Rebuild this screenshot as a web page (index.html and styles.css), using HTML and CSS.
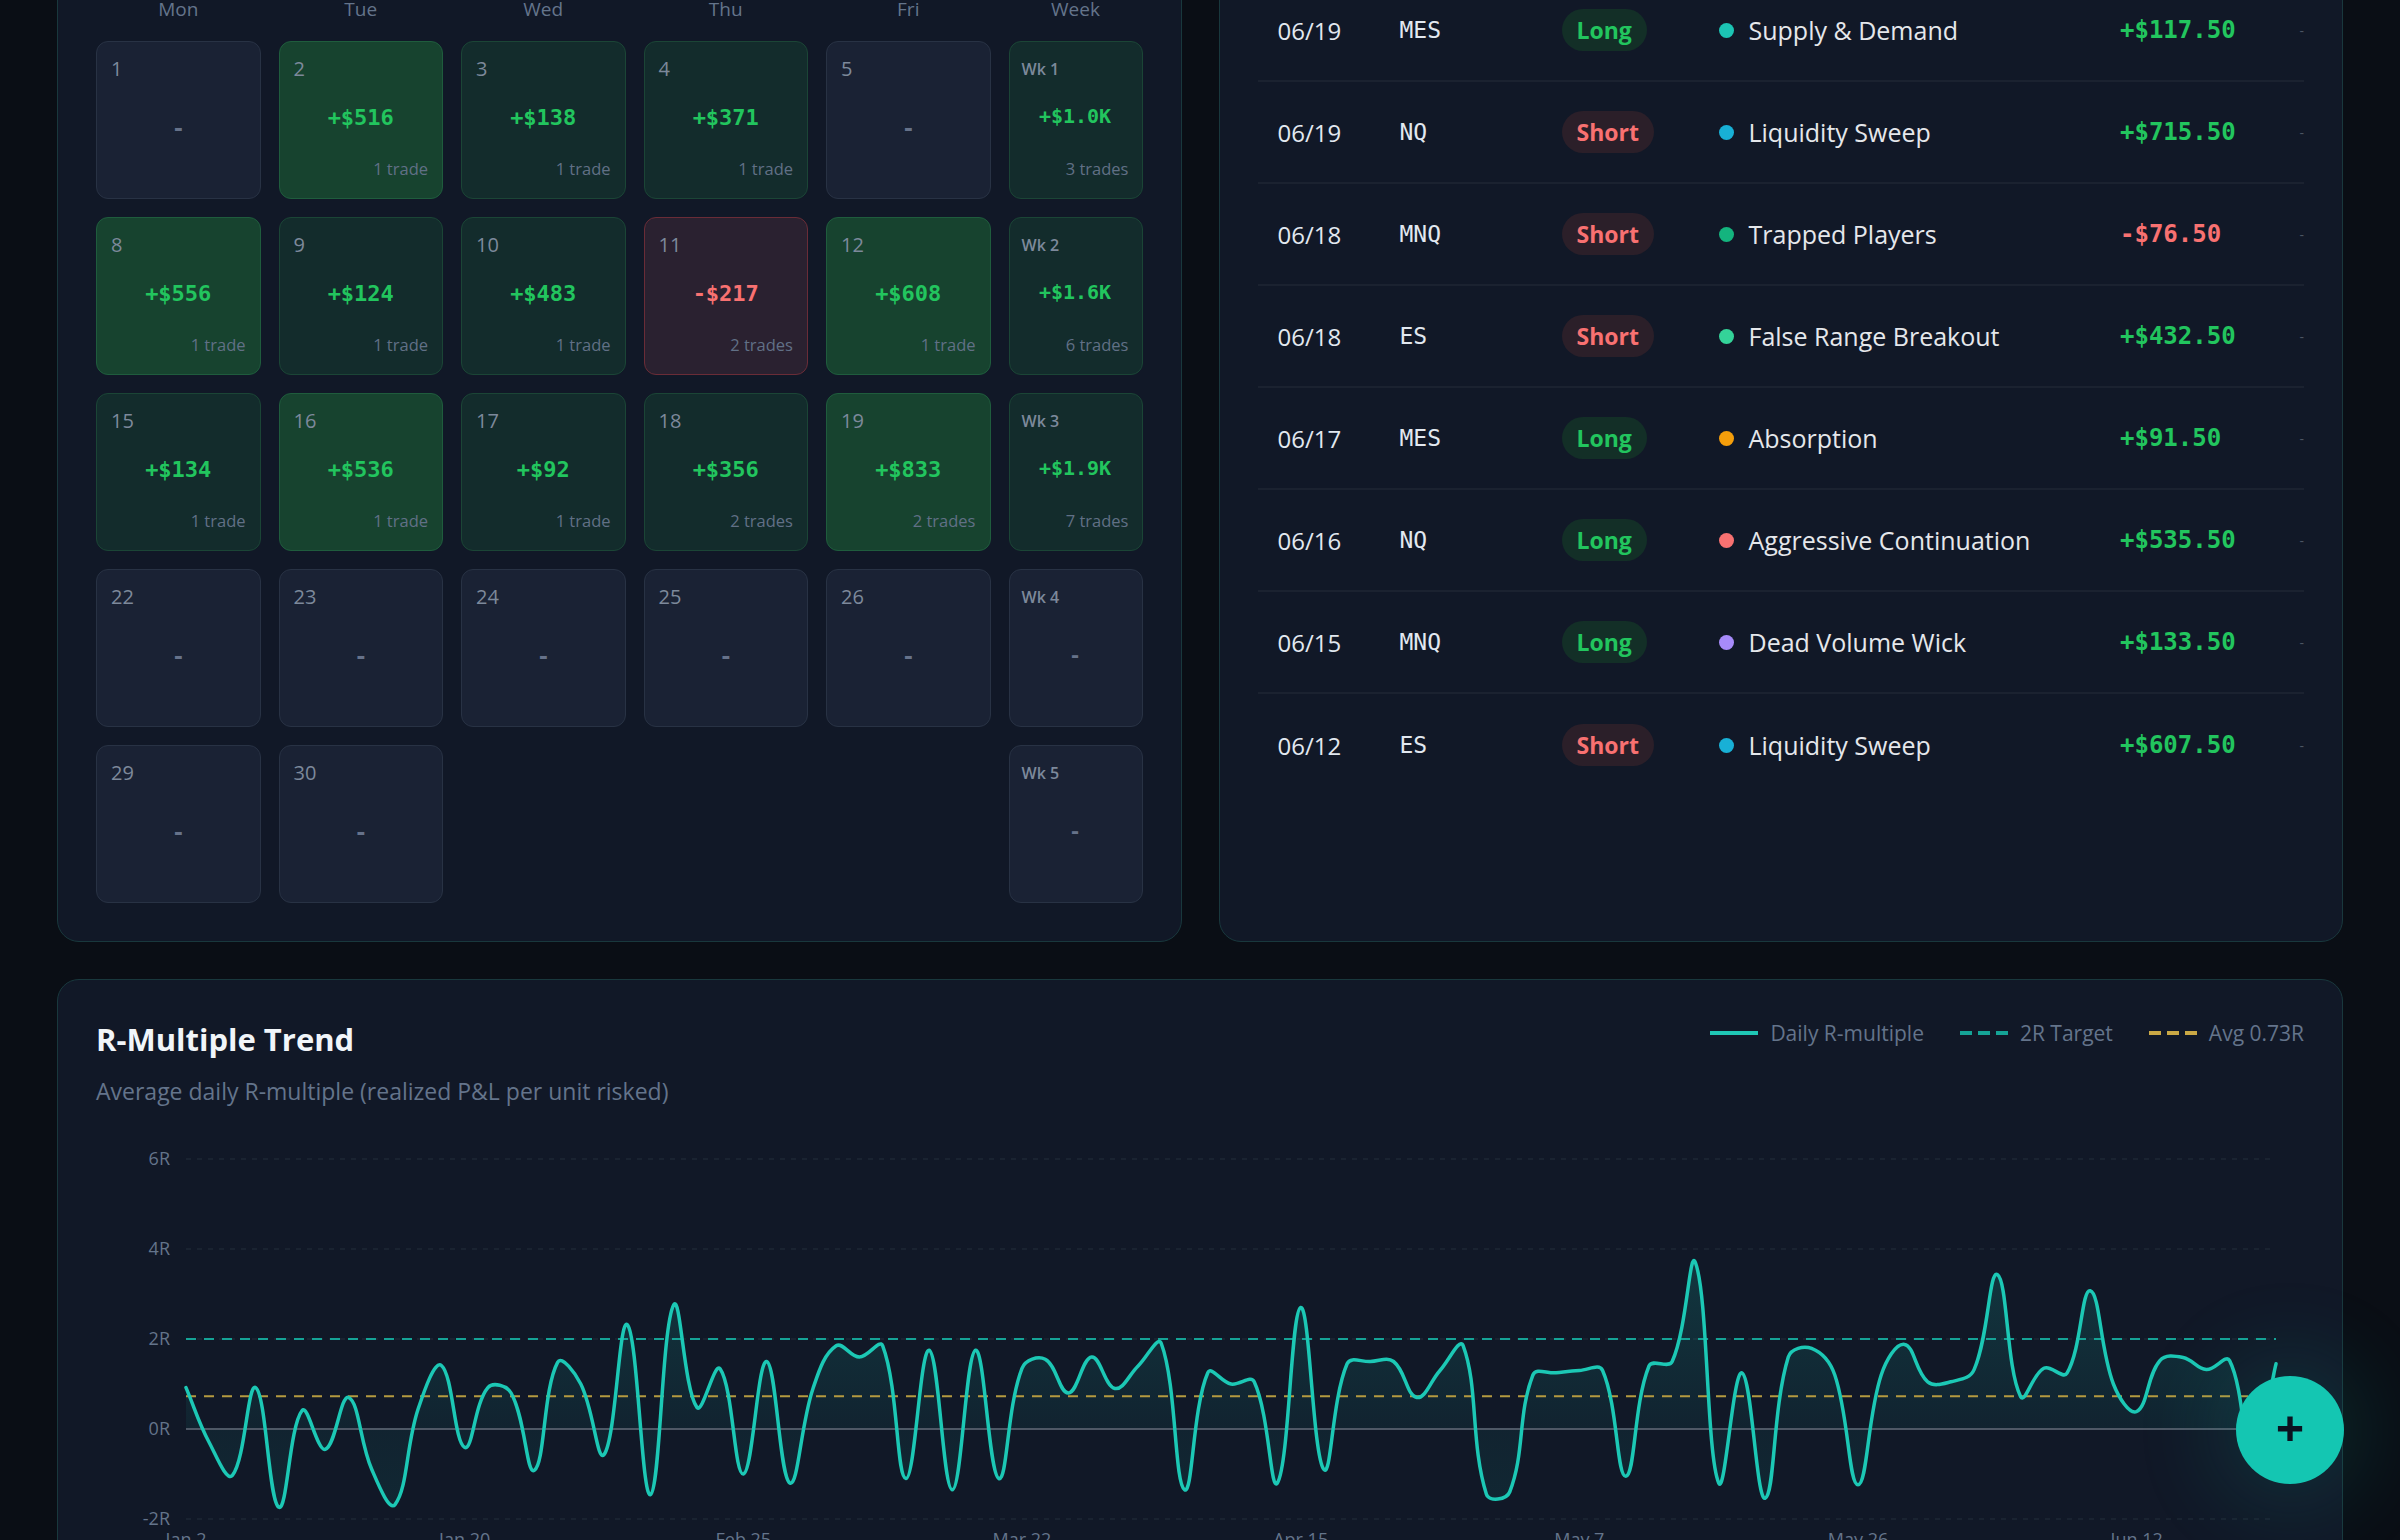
FILE: index.html
```html
<!DOCTYPE html>
<html lang="en">
<head>
    <meta charset="UTF-8">
    <meta name="viewport" content="width=device-width, initial-scale=1.0">
    <title>Trading Journal</title>
    <link rel="stylesheet" href="styles.css">
</head>
<body>
    <main class="dashboard">
        <section class="top-row">
            <div class="card calendar-card">
                <div class="card-head">
                    <h2 class="card-title">June 2026</h2>
                    <div class="month-nav"><span>&lsaquo;</span><span>&rsaquo;</span></div>
                </div>
                <div class="cal-weekdays">
                    <span>Mon</span><span>Tue</span><span>Wed</span><span>Thu</span><span>Fri</span><span>Week</span>
                </div>
                <div class="cal-grid">
                    <div class="day"><span class="day-num">1</span><span class="day-pnl">-</span></div>
                    <div class="day big-win"><span class="day-num">2</span><span class="day-pnl">+$516</span><span class="day-count">1 trade</span></div>
                    <div class="day win"><span class="day-num">3</span><span class="day-pnl">+$138</span><span class="day-count">1 trade</span></div>
                    <div class="day win"><span class="day-num">4</span><span class="day-pnl">+$371</span><span class="day-count">1 trade</span></div>
                    <div class="day"><span class="day-num">5</span><span class="day-pnl">-</span></div>
                    <div class="day week win"><span class="day-num">Wk 1</span><span class="day-pnl">+$1.0K</span><span class="day-count">3 trades</span></div>

                    <div class="day big-win"><span class="day-num">8</span><span class="day-pnl">+$556</span><span class="day-count">1 trade</span></div>
                    <div class="day win"><span class="day-num">9</span><span class="day-pnl">+$124</span><span class="day-count">1 trade</span></div>
                    <div class="day win"><span class="day-num">10</span><span class="day-pnl">+$483</span><span class="day-count">1 trade</span></div>
                    <div class="day loss"><span class="day-num">11</span><span class="day-pnl">-$217</span><span class="day-count">2 trades</span></div>
                    <div class="day big-win"><span class="day-num">12</span><span class="day-pnl">+$608</span><span class="day-count">1 trade</span></div>
                    <div class="day week win"><span class="day-num">Wk 2</span><span class="day-pnl">+$1.6K</span><span class="day-count">6 trades</span></div>

                    <div class="day win"><span class="day-num">15</span><span class="day-pnl">+$134</span><span class="day-count">1 trade</span></div>
                    <div class="day big-win"><span class="day-num">16</span><span class="day-pnl">+$536</span><span class="day-count">1 trade</span></div>
                    <div class="day win"><span class="day-num">17</span><span class="day-pnl">+$92</span><span class="day-count">1 trade</span></div>
                    <div class="day win"><span class="day-num">18</span><span class="day-pnl">+$356</span><span class="day-count">2 trades</span></div>
                    <div class="day big-win"><span class="day-num">19</span><span class="day-pnl">+$833</span><span class="day-count">2 trades</span></div>
                    <div class="day week win"><span class="day-num">Wk 3</span><span class="day-pnl">+$1.9K</span><span class="day-count">7 trades</span></div>

                    <div class="day"><span class="day-num">22</span><span class="day-pnl">-</span></div>
                    <div class="day"><span class="day-num">23</span><span class="day-pnl">-</span></div>
                    <div class="day"><span class="day-num">24</span><span class="day-pnl">-</span></div>
                    <div class="day"><span class="day-num">25</span><span class="day-pnl">-</span></div>
                    <div class="day"><span class="day-num">26</span><span class="day-pnl">-</span></div>
                    <div class="day week"><span class="day-num">Wk 4</span><span class="day-pnl">-</span></div>

                    <div class="day"><span class="day-num">29</span><span class="day-pnl">-</span></div>
                    <div class="day"><span class="day-num">30</span><span class="day-pnl">-</span></div>
                    <div class="blank"></div>
                    <div class="blank"></div>
                    <div class="blank"></div>
                    <div class="day week"><span class="day-num">Wk 5</span><span class="day-pnl">-</span></div>
                </div>
            </div>

            <div class="card trades-card">
                <div class="card-head">
                    <h2 class="card-title">Recent Trades</h2>
                    <a class="view-all">View all</a>
                </div>
                <div class="trade-list">
                    <div class="trade-row">
                        <span class="trade-date">06/19</span><span class="trade-sym">MES</span>
                        <span class="side long">Long</span>
                        <span class="strategy"><i class="dot" style="background:#1cc4b4"></i>Supply &amp; Demand</span>
                        <span class="pnl">+$117.50</span><span class="trade-more">-</span>
                    </div>
                    <div class="trade-row">
                        <span class="trade-date">06/19</span><span class="trade-sym">NQ</span>
                        <span class="side short">Short</span>
                        <span class="strategy"><i class="dot" style="background:#18b0d6"></i>Liquidity Sweep</span>
                        <span class="pnl">+$715.50</span><span class="trade-more">-</span>
                    </div>
                    <div class="trade-row">
                        <span class="trade-date">06/18</span><span class="trade-sym">MNQ</span>
                        <span class="side short">Short</span>
                        <span class="strategy"><i class="dot" style="background:#14b47e"></i>Trapped Players</span>
                        <span class="pnl neg">-$76.50</span><span class="trade-more">-</span>
                    </div>
                    <div class="trade-row">
                        <span class="trade-date">06/18</span><span class="trade-sym">ES</span>
                        <span class="side short">Short</span>
                        <span class="strategy"><i class="dot" style="background:#34d399"></i>False Range Breakout</span>
                        <span class="pnl">+$432.50</span><span class="trade-more">-</span>
                    </div>
                    <div class="trade-row">
                        <span class="trade-date">06/17</span><span class="trade-sym">MES</span>
                        <span class="side long">Long</span>
                        <span class="strategy"><i class="dot" style="background:#f59e0b"></i>Absorption</span>
                        <span class="pnl">+$91.50</span><span class="trade-more">-</span>
                    </div>
                    <div class="trade-row">
                        <span class="trade-date">06/16</span><span class="trade-sym">NQ</span>
                        <span class="side long">Long</span>
                        <span class="strategy"><i class="dot" style="background:#f87171"></i>Aggressive Continuation</span>
                        <span class="pnl">+$535.50</span><span class="trade-more">-</span>
                    </div>
                    <div class="trade-row">
                        <span class="trade-date">06/15</span><span class="trade-sym">MNQ</span>
                        <span class="side long">Long</span>
                        <span class="strategy"><i class="dot" style="background:#a78bfa"></i>Dead Volume Wick</span>
                        <span class="pnl">+$133.50</span><span class="trade-more">-</span>
                    </div>
                    <div class="trade-row">
                        <span class="trade-date">06/12</span><span class="trade-sym">ES</span>
                        <span class="side short">Short</span>
                        <span class="strategy"><i class="dot" style="background:#18b0d6"></i>Liquidity Sweep</span>
                        <span class="pnl">+$607.50</span><span class="trade-more">-</span>
                    </div>
                </div>
            </div>
        </section>

        <section class="card trend-card">
            <div class="trend-head">
                <div>
                    <h2 class="trend-title">R-Multiple Trend</h2>
                    <p class="trend-sub">Average daily R-multiple (realized P&amp;L per unit risked)</p>
                </div>
                <div class="legend">
                    <span class="legend-item"><i class="swatch line"></i>Daily R-multiple</span>
                    <span class="legend-item"><i class="swatch target"></i>2R Target</span>
                    <span class="legend-item"><i class="swatch avg"></i>Avg 0.73R</span>
                </div>
            </div>
            <svg class="trend-chart" id="trendChart" viewBox="0 0 2208 440"></svg>
        </section>
    </main>

    <button class="fab">+</button>

    <script src="trend.js"></script>
</body>
</html>
```

FILE: styles.css
```css
* {
    box-sizing: border-box;
}
body {
    margin: 0;
    background-color: #0a0e15;
    color: #e2e8f0;
    font-family: "Open Sans", "Noto Sans", sans-serif;
    overflow: hidden;
}
.dashboard {
    display: flex;
    flex-direction: column;
    gap: 37px;
    padding: 0 57px;
}
.top-row {
    display: grid;
    grid-template-columns: 1fr 1fr;
    gap: 37px;
    margin-top: -115px;
}
.card {
    background: #111827;
    border: 1px solid #19383d;
    border-radius: 22px;
    padding: 38px;
}
.card-head {
    height: 40px;
    margin-bottom: 16px;
    display: flex;
    align-items: center;
    justify-content: space-between;
}
.card-title {
    margin: 0;
    font-size: 26px;
    font-weight: 700;
    color: #f1f5f9;
}
.month-nav {
    display: flex;
    gap: 20px;
    font-size: 28px;
    color: #64748b;
}
.view-all {
    font-size: 18px;
    color: #2dd4bf;
}

/* calendar */
.cal-weekdays,
.cal-grid {
    display: grid;
    grid-template-columns: repeat(5, 1fr) 134px;
    column-gap: 18px;
}
.cal-weekdays {
    padding-top: 16px;
    margin-bottom: 19px;
    font-size: 19px;
    line-height: 26px;
    color: #64748b;
    text-align: center;
}
.cal-grid {
    grid-auto-rows: 158px;
    row-gap: 18px;
}
.day {
    display: flex;
    flex-direction: column;
    padding: 14px 14px 18px;
    background: #1a2234;
    border: 1px solid #283244;
    border-radius: 12px;
}
.day-num {
    font-size: 20px;
    line-height: 26px;
    color: #7d899b;
}
.day-pnl {
    flex: 1;
    display: flex;
    align-items: center;
    justify-content: center;
    margin-bottom: 6px;
    font-family: "DejaVu Sans Mono", "Liberation Mono", monospace;
    font-size: 22px;
    font-weight: 700;
    color: #66728a;
}
.day-count {
    text-align: right;
    font-size: 16.5px;
    line-height: 22px;
    color: #617086;
}
.day.win {
    background: #132c2c;
    border-color: #1b4536;
}
.day.big-win {
    background: #17432f;
    border-color: #1f5c3d;
}
.day.loss {
    background: #2a2130;
    border-color: #6a2c37;
}
.day.win .day-pnl,
.day.big-win .day-pnl {
    color: #22c55e;
}
.day.loss .day-pnl {
    color: #f87171;
}
.day.week {
    padding: 16px 13px 18px 12px;
}
.week .day-num {
    font-size: 16px;
    line-height: 22px;
    font-weight: 600;
}
.week .day-pnl {
    font-size: 20px;
}

/* recent trades */
.trade-row {
    display: grid;
    grid-template-columns: 122px 162px 157px 1fr 172px 12px;
    align-items: center;
    height: 102px;
    padding-left: 20px;
    border-bottom: 2px solid #1b2230;
}
.trade-row:last-child {
    border-bottom: none;
}
.trade-date {
    font-size: 24px;
    color: #e2e8f0;
}
.trade-sym {
    font-family: "DejaVu Sans Mono", "Liberation Mono", monospace;
    font-size: 23px;
    color: #e2e8f0;
}
.side {
    justify-self: start;
    padding: 8px 15px;
    border-radius: 999px;
    font-size: 23px;
    line-height: 26px;
    font-weight: 700;
}
.side.long {
    background: #132f27;
    color: #22c55e;
}
.side.short {
    background: #2b1f29;
    color: #f87171;
}
.strategy {
    display: flex;
    align-items: center;
    gap: 15px;
    font-size: 25px;
    color: #e5e7eb;
}
.dot {
    width: 15px;
    height: 15px;
    border-radius: 50%;
}
.pnl {
    font-family: "DejaVu Sans Mono", "Liberation Mono", monospace;
    font-size: 24px;
    font-weight: 700;
    color: #22c55e;
}
.pnl.neg {
    color: #f87171;
}
.trade-more {
    text-align: right;
    font-size: 14px;
    color: #4b5563;
}

/* r-multiple chart */
.trend-head {
    display: flex;
    justify-content: space-between;
    align-items: flex-start;
}
.trend-title {
    margin: 0;
    font-size: 31px;
    line-height: 42px;
    font-weight: 700;
    color: #f1f5f9;
}
.trend-sub {
    margin: 16px 0 0;
    font-size: 23px;
    line-height: 30px;
    color: #64748b;
}
.legend {
    display: flex;
    gap: 36px;
    font-size: 21px;
    line-height: 30px;
    color: #64748b;
}
.legend-item {
    display: flex;
    align-items: center;
    gap: 12px;
}
.swatch {
    width: 48px;
    height: 4px;
}
.swatch.line {
    background: #1fc7b5;
}
.swatch.target {
    background: repeating-linear-gradient(90deg, #15a396 0 12px, transparent 12px 18px);
}
.swatch.avg {
    background: repeating-linear-gradient(90deg, #caa845 0 12px, transparent 12px 18px);
}
.trend-chart {
    display: block;
    width: 100%;
    height: 440px;
    margin-top: 25px;
}
.trend-chart text {
    font-family: "Open Sans", "Noto Sans", sans-serif;
    font-size: 18px;
    fill: #64748b;
}

.fab {
    position: fixed;
    right: 56px;
    bottom: 56px;
    width: 108px;
    height: 108px;
    display: flex;
    align-items: center;
    justify-content: center;
    border: none;
    border-radius: 50%;
    background: #14c6b2;
    color: #0b1220;
    font-family: "Open Sans", sans-serif;
    font-size: 50px;
    font-weight: 700;
    line-height: 1;
    padding: 0 0 4px;
    box-shadow: 0 0 90px 20px rgba(20, 198, 178, 0.14);
    cursor: pointer;
}
```

FILE: trend.js
```js
// daily average R-multiple, oldest first
const trend = [
    0.92, -0.3, -1.03, 0.92, -1.74, 0.41, -0.45, 0.7, -0.9, -1.68,
    0.45, 1.41, -0.41, 0.92, 0.8, -0.92, 1.48, 1.0, -0.57, 2.32,
    -1.46, 2.76, 0.48, 1.34, -1.0, 1.5, -1.2, 0.9, 1.85, 1.6,
    1.85, -1.1, 1.75, -1.35, 1.75, -1.1, 1.35, 1.55, 0.8, 1.6,
    0.9, 1.4, 1.9, -1.35, 1.25, 1.0, 1.05, -1.2, 2.7, -0.9,
    1.45, 1.5, 1.5, 0.7, 1.3, 1.85, -1.45, -1.4, 1.2, 1.25,
    1.3, 1.3, -1.05, 1.4, 1.5, 3.7, -1.2, 1.25, -1.54, 1.6,
    1.79, 1.2, -1.24, 1.2, 1.88, 1.05, 1.05, 1.32, 3.43, 0.72,
    1.35, 1.24, 3.07, 1.0, 0.39, 1.52, 1.59, 1.32, 1.52, -0.7,
    1.45
];
const ticks = [
    ['Jan 2', 0], ['Jan 20', 12], ['Feb 25', 24], ['Mar 22', 36],
    ['Apr 15', 48], ['May 7', 60], ['May 26', 72], ['Jun 12', 84]
];
const avgR = 0.73;
const targetR = 2;

const svg = document.getElementById('trendChart');
const NS = 'http://www.w3.org/2000/svg';
const plot = { left: 90, right: 2180, top: 28, perR: 45 };

const yAt = r => plot.top + (6 - r) * plot.perR;
const xAt = i => plot.left + (plot.right - plot.left) * i / (trend.length - 1);

function el(tag, attrs, text) {
    const node = document.createElementNS(NS, tag);
    for (const key in attrs) node.setAttribute(key, attrs[key]);
    if (text) node.textContent = text;
    svg.appendChild(node);
    return node;
}

// same smoothing as a tension 0.4 spline
function controlPoints(prev, cur, next) {
    const d01 = Math.hypot(cur.x - prev.x, cur.y - prev.y);
    const d12 = Math.hypot(next.x - cur.x, next.y - cur.y);
    const sum = d01 + d12 || 1;
    const fa = 0.4 * d01 / sum;
    const fb = 0.4 * d12 / sum;
    return {
        prev: { x: cur.x - fa * (next.x - prev.x), y: cur.y - fa * (next.y - prev.y) },
        next: { x: cur.x + fb * (next.x - prev.x), y: cur.y + fb * (next.y - prev.y) }
    };
}

const pts = trend.map((r, i) => ({ x: xAt(i), y: yAt(r) }));
const cps = pts.map((p, i) => controlPoints(pts[i - 1] || p, p, pts[i + 1] || p));

let linePath = `M${pts[0].x},${pts[0].y}`;
for (let i = 1; i < pts.length; i++) {
    const a = cps[i - 1].next, b = cps[i].prev, p = pts[i];
    linePath += ` C${a.x.toFixed(1)},${a.y.toFixed(1)} ${b.x.toFixed(1)},${b.y.toFixed(1)} ${p.x.toFixed(1)},${p.y.toFixed(1)}`;
}

// gradient for the area under the line
const defs = el('defs', {});
const grad = document.createElementNS(NS, 'linearGradient');
grad.setAttribute('id', 'trendFill');
grad.setAttribute('gradientUnits', 'userSpaceOnUse');
grad.setAttribute('x1', 0); grad.setAttribute('x2', 0);
grad.setAttribute('y1', yAt(4)); grad.setAttribute('y2', yAt(-2));
[[0, 0.2], [0.66, 0.07], [1, 0.1]].forEach(([off, op]) => {
    const stop = document.createElementNS(NS, 'stop');
    stop.setAttribute('offset', off);
    stop.setAttribute('stop-color', '#14b8a6');
    stop.setAttribute('stop-opacity', op);
    grad.appendChild(stop);
});
defs.appendChild(grad);

// grid + y labels
[6, 4, 2, 0, -2].forEach(r => {
    const y = yAt(r);
    if (r !== 0) {
        el('line', { x1: plot.left, x2: plot.right, y1: y, y2: y, stroke: '#1e2736', 'stroke-width': 1.5, 'stroke-dasharray': '5 6' });
    }
    el('text', { x: 74, y: y + 6, 'text-anchor': 'end' }, r + 'R');
});

// area, zero line, reference lines, series
el('path', { d: `${linePath} L${plot.right},${yAt(0)} L${plot.left},${yAt(0)} Z`, fill: 'url(#trendFill)' });
el('line', { x1: plot.left, x2: plot.right, y1: yAt(0), y2: yAt(0), stroke: '#4f5866', 'stroke-width': 2 });
el('line', { x1: plot.left, x2: plot.right, y1: yAt(targetR), y2: yAt(targetR), stroke: '#15a396', 'stroke-width': 2, 'stroke-dasharray': '10 8' });
el('line', { x1: plot.left, x2: plot.right, y1: yAt(avgR), y2: yAt(avgR), stroke: '#b59a40', 'stroke-width': 2, 'stroke-dasharray': '10 8' });
el('path', { d: linePath, fill: 'none', stroke: '#1cc8b5', 'stroke-width': 3.5, 'stroke-linejoin': 'round', 'stroke-linecap': 'round' });

// x labels
ticks.forEach(([label, i]) => {
    el('text', { x: xAt(i), y: 415, 'text-anchor': 'middle' }, label);
});
```
